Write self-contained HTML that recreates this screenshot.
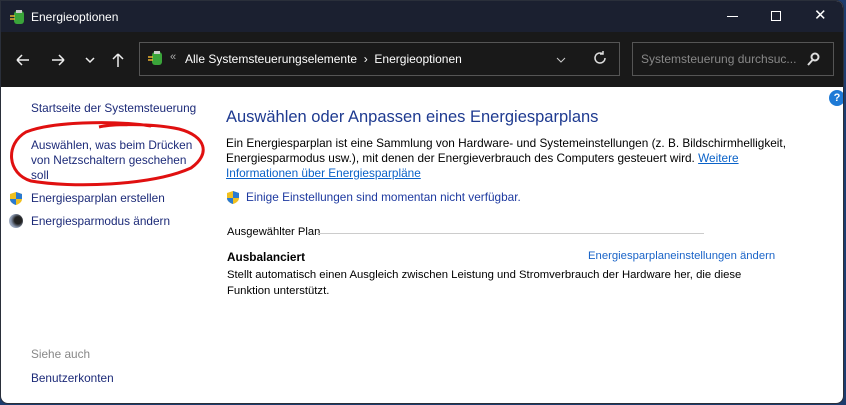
<!DOCTYPE html>
<html><head><meta charset="utf-8"><style>
*{margin:0;padding:0;box-sizing:border-box}
body{width:846px;height:405px;overflow:hidden;background:#1d3c6e;font-family:"Liberation Sans",sans-serif;position:relative}
.win{position:absolute;left:0;top:0;width:844px;height:404px;background:#fff;border-radius:0 8px 8px 8px;overflow:hidden;border:1px solid #2a2f3a}
.title{position:absolute;left:0;top:0;right:0;height:31px;background:#1b2030;color:#fff;font-size:12px}
.tool{position:absolute;left:0;top:31px;right:0;height:55px;background:#191919}
.a{position:absolute;white-space:nowrap}
.l{color:#1c2a78;font-size:11.8px}
.t{font-size:11.8px;color:#000}
.b{color:#1a64c8;font-size:11.8px}
</style></head><body>
<div class="win">
<div class="title">
 <svg class="a" style="left:8px;top:8px" width="17" height="16"><rect x="5" y="2" width="10" height="13" rx="3" fill="#3aa43a"/><rect x="7" y="1" width="6" height="3" fill="#ccc"/><path d="M1 7h5M1 10h5" stroke="#e8b030" stroke-width="1.5"/></svg>
 <div class="a" style="left:30px;top:9px">Energieoptionen</div>
 <div class="a" style="left:726px;top:15px;width:11px;height:1px;background:#fff"></div>
 <div class="a" style="left:770px;top:10px;width:10px;height:10px;border:1px solid #fff"></div>
 <div class="a" style="left:813px;top:5px;font-size:15px;color:#fff">✕</div>
</div>
<div class="tool">
 <svg class="a" style="left:14px;top:20px" width="110" height="16" stroke="#eee" stroke-width="1.5" fill="none"><path d="M2 8h12M2 8l5-5M2 8l5 5"/><path d="M37 8h12M49 8l-5-5M49 8l-5 5"/><path d="M71 6l4 4 4-4"/><path d="M103 2v13M103 2l-5 5M103 2l5 5"/></svg>
 <div class="a" style="left:138px;top:10px;width:481px;height:34px;border:1px solid #555"></div>
 <svg class="a" style="left:146px;top:18px" width="17" height="16"><rect x="5" y="2" width="10" height="13" rx="3" fill="#3aa43a"/><rect x="7" y="1" width="6" height="3" fill="#ccc"/><path d="M1 7h5M1 10h5" stroke="#e8b030" stroke-width="1.5"/></svg>
 <div class="a" style="left:169px;top:19px;color:#aaa;font-size:11px">«</div>
 <div class="a" style="left:184px;top:20px;color:#fff;font-size:12px">Alle Systemsteuerungselemente&nbsp;&nbsp;›&nbsp;&nbsp;Energieoptionen</div>
 <svg class="a" style="left:555px;top:24px" width="10" height="8" stroke="#ccc" fill="none"><path d="M1 2l4 4 4-4"/></svg>
 <svg class="a" style="left:592px;top:19px" width="14" height="14" stroke="#ddd" stroke-width="1.5" fill="none"><path d="M12 7A5 5 0 1 1 10 3"/><path d="M10 0v3h-3"/></svg>
 <div class="a" style="left:631px;top:10px;width:202px;height:34px;border:1px solid #555"></div>
 <div class="a" style="left:640px;top:20px;color:#888;font-size:12px">Systemsteuerung durchsuc...</div>
 <svg class="a" style="left:806px;top:20px" width="14" height="14" stroke="#ddd" stroke-width="2" fill="none"><circle cx="8" cy="5" r="3.5"/><path d="M5.5 8L1 13"/></svg>
</div>
<div class="a" style="left:828px;top:89px;width:16px;height:16px;border-radius:50%;background:#1e7ad6;color:#fff;font-size:11px;font-weight:bold;text-align:center;line-height:16px">?</div>
<div class="a l" style="left:30px;top:100px">Startseite der Systemsteuerung</div>
<div class="a l" style="left:30px;top:137px;line-height:15px">Auswählen, was beim Drücken<br>von Netzschaltern geschehen<br>soll</div>
<svg class="a" style="left:0;top:115px" width="215" height="75"><path d="M150 10C110 4 50 6 25 16C4 28 6 58 30 65C70 72 150 70 190 52C210 38 205 20 178 13C150 7 110 8 98 11" stroke="#e01010" stroke-width="3" fill="none"/></svg>
<svg class="a" style="left:8px;top:190px" width="14" height="15"><path d="M7 1L13 3V8C13 11 10 13 7 14C4 13 1 11 1 8V3Z" fill="#f0c020"/><path d="M7 1L13 3V8H7ZM7 8V14C4 13 1 11 1 8Z" fill="#2a7ad0"/></svg>
<div class="a l" style="left:30px;top:190px">Energiesparplan erstellen</div>
<div class="a" style="left:8px;top:213px;width:14px;height:14px;border-radius:50%;background:radial-gradient(circle at 65% 45%,#222 30%,#8a98b0 60%,#d0d8e4)"></div>
<div class="a l" style="left:30px;top:213px">Energiesparmodus ändern</div>
<div class="a" style="left:30px;top:346px;font-size:11.8px;color:#888">Siehe auch</div>
<div class="a l" style="left:30px;top:370px">Benutzerkonten</div>
<div class="a" style="left:225px;top:107px;font-size:16.5px;color:#1e3a90">Auswählen oder Anpassen eines Energiesparplans</div>
<div class="a t" style="left:225px;top:135px;line-height:15px">Ein Energiesparplan ist eine Sammlung von Hardware- und Systemeinstellungen (z. B. Bildschirmhelligkeit,<br>Energiesparmodus usw.), mit denen der Energieverbrauch des Computers gesteuert wird. <span style="color:#0a62c8;text-decoration:underline">Weitere</span><br><span style="color:#0a62c8;text-decoration:underline">Informationen über Energiesparpläne</span></div>
<svg class="a" style="left:225px;top:189px" width="14" height="15"><path d="M7 1L13 3V8C13 11 10 13 7 14C4 13 1 11 1 8V3Z" fill="#f0c020"/><path d="M7 1L13 3V8H7ZM7 8V14C4 13 1 11 1 8Z" fill="#2a7ad0"/></svg>
<div class="a" style="left:245px;top:189px;font-size:11.8px;color:#1e3aa0">Einige Einstellungen sind momentan nicht verfügbar.</div>
<div class="a t" style="left:226px;top:225px;font-size:11.2px">Ausgewählter Plan</div>
<div class="a" style="left:316px;top:232px;width:387px;height:1px;background:#ccc"></div>
<div class="a t" style="left:226px;top:249px;font-weight:bold">Ausbalanciert</div>
<div class="a b" style="left:587px;top:249px;font-size:11.3px">Energiesparplaneinstellungen ändern</div>
<div class="a t" style="left:226px;top:266px;line-height:16px;font-size:11.3px">Stellt automatisch einen Ausgleich zwischen Leistung und Stromverbrauch der Hardware her, die diese<br>Funktion unterstützt.</div>
</div>
</body></html>
